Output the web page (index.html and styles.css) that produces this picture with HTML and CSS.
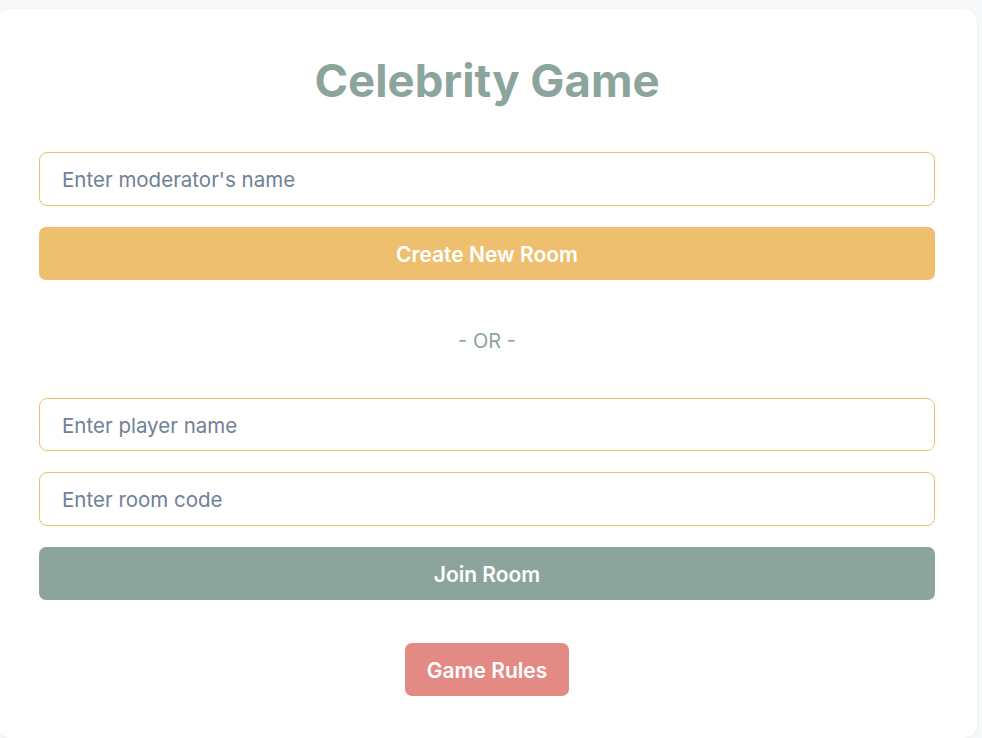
FILE: index.html
```html
<!DOCTYPE html>
<html lang="en">
<head>
<meta charset="utf-8">
<title>Celebrity Game</title>
<link rel="stylesheet" href="styles.css">
</head>
<body>
<main class="card">
  <h1 class="title">Celebrity Game</h1>
  <form class="form">
    <input class="field" type="text" placeholder="Enter moderator's name">
    <button class="btn btn-create" type="button">Create New Room</button>
    <p class="divider">- OR -</p>
    <input class="field" type="text" placeholder="Enter player name">
    <input class="field" type="text" placeholder="Enter room code">
    <button class="btn btn-join" type="button">Join Room</button>
  </form>
  <div class="rules-row">
    <button class="btn btn-rules" type="button">Game Rules</button>
  </div>
</main>
</body>
</html>
```

FILE: styles.css
```css
* { box-sizing: border-box; }
html, body { margin: 0; height: 100%; }
body {
  background: #f7f8fa;
  font-family: Inter, "Noto Sans", sans-serif;
  overflow: hidden;
}
.card {
  margin: 9px 5px 0 -4px;
  background: #ffffff;
  border-radius: 14px;
  box-shadow: 0 1px 4px rgba(0,0,0,0.05);
  padding: 45px 42px 40px 43px;
  min-height: 729px;
}
.title {
  margin: 0 0 44px;
  text-align: center;
  font-size: 45.5px;
  line-height: 54px;
  font-weight: 700;
  color: #8ca59c;
}
.form {
  display: flex;
  flex-direction: column;
  gap: 21px;
}
.field {
  height: 53.5px;
  border: 1px solid #efc06f;
  border-radius: 8px;
  padding: 2px 22px 0;
  font-family: inherit;
  font-size: 20.5px;
  color: #2d3748;
  background: #fff;
  outline: none;
}
.field::placeholder { color: #718096; }
.btn {
  border: none;
  border-radius: 7px;
  color: #ffffff;
  font-family: inherit;
  font-weight: 600;
  font-size: 21px;
  padding: 2px 0 0;
  cursor: pointer;
}
.btn-create, .btn-join { height: 53px; }
.btn-create { background: #edbf6e; }
.btn-join { background: #8ca59c; }
.divider {
  margin: 22px 0 18px;
  text-align: center;
  font-size: 20px;
  color: #8ca59c;
  line-height: 36px;
}
.rules-row {
  display: flex;
  justify-content: center;
  margin-top: 43px;
}
.btn-rules {
  background: #e38a84;
  width: 164px;
  height: 53px;
}
```
